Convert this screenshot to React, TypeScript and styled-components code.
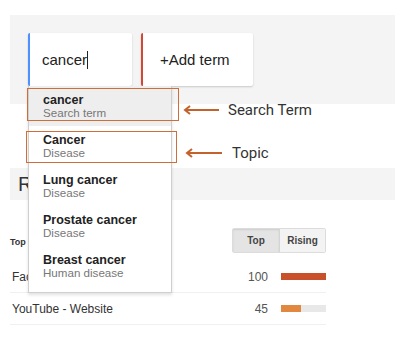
import styled, { createGlobalStyle } from 'styled-components';

const GlobalStyle = createGlobalStyle`
body {
  margin: 0;
  background: #fff;
  font-family: "Liberation Sans", Arial, sans-serif;
  color: #333;
}
`

const Page = styled.div`
position: relative;
width: 385px;
padding: 15px 8px 20px 10px;
`

const TermsPanel = styled.div`
height: 89px;
box-sizing: border-box;
background-color: #f4f4f4;
padding: 18px 0 0 18px;

display: flex;
gap: 9px;
align-items: flex-start;
`

const TermBox = styled.div<{ $accent: string; $width: number; $indent: number }>`
width: ${p => p.$width}px;
height: 53px;
box-sizing: border-box;
background: #fff;
border-left: 2px solid ${p => p.$accent};
border-radius: 2px;
box-shadow: 0 1px 2px rgba(0, 0, 0, 0.18);
padding-left: ${p => p.$indent}px;

display: flex;
align-items: center;
font-size: 15px;
color: #222;
`

const Caret = styled.span`
display: inline-block;
width: 1px;
height: 18px;
background: #222;
`

const SectionHeader = styled.div`
margin-top: 64px;
height: 32px;
background-color: #f4f4f4;
padding-left: 8px;

display: flex;
align-items: center;
font-size: 20px;
color: #333;
`

const Table = styled.div`
width: 316px;
margin-top: 28px;
`

const ToggleRow = styled.div`
height: 25px;
display: flex;
justify-content: space-between;
align-items: center;
margin-bottom: 8px;
`

const SmallLabel = styled.span`
font-size: 9px;
font-weight: bold;
color: #333;
padding-top: 2px;
`

const Toggle = styled.div`
display: flex;
border: 1px solid #dcdcdc;
border-radius: 2px;
overflow: hidden;
height: 25px;
box-sizing: border-box;
`

const ToggleButton = styled.div<{ $active?: boolean }>`
width: ${p => (p.$active ? 46 : 45)}px;
display: flex;
align-items: center;
justify-content: center;
font-size: 10px;
font-weight: bold;
color: #444;
background: ${p => (p.$active ? '#e4e4e4' : '#f3f3f3')};
border-right: ${p => (p.$active ? '1px solid #d4d4d4' : 'none')};
box-shadow: ${p => (p.$active ? 'inset 0 1px 2px rgba(0,0,0,0.1)' : 'none')};
`

const Row = styled.div`
height: 31px;
border-bottom: 1px solid #eef0f5;
display: flex;
align-items: center;
font-size: 12px;
color: #333;
padding-left: 2px;
`

const RowName = styled.span`
flex: 1;
`

const RowValue = styled.span`
width: 40px;
text-align: right;
color: #555;
margin-right: 13px;
`

const Bar = styled.div`
width: 45px;
height: 7px;
background: #e8e8e8;
`

const BarFill = styled.div<{ $color: string }>`
height: 100%;
background: ${p => p.$color};
`

const Dropdown = styled.div`
position: absolute;
left: 28px;
top: 86px;
width: 144px;
box-sizing: border-box;
background: #fff;
border: 1px solid #cfcfcf;
border-top: none;
box-shadow: 0 2px 3px rgba(0, 0, 0, 0.12);
padding-bottom: 6px;
`

const Suggestion = styled.div<{ $selected?: boolean }>`
height: 40px;
box-sizing: border-box;
padding: 8px 0 0 14px;
background: ${p => (p.$selected ? '#eeeeee' : '#fff')};
`

const SuggestionTitle = styled.div`
font-size: 12.5px;
font-weight: bold;
line-height: 13px;
color: #222;
`

const SuggestionType = styled.div`
font-size: 11.6px;
line-height: 12px;
color: #777;
`

const Highlight = styled.div<{ $top: number; $left: number; $width: number; $height: number }>`
position: absolute;
top: ${p => p.$top}px;
left: ${p => p.$left}px;
width: ${p => p.$width}px;
height: ${p => p.$height}px;
box-sizing: border-box;
border: 1.5px solid #cc6f3a;
`

const Callout = styled.div<{ $top: number; $left: number; $gap: number }>`
position: absolute;
top: ${p => p.$top}px;
left: ${p => p.$left}px;
display: flex;
align-items: center;
gap: ${p => p.$gap}px;
font-family: Roboto, "Liberation Sans", sans-serif;
font-size: 15px;
color: #333;
`

function Arrow({ width }: { width: number }): JSX.Element {
  return (
    <svg width={width} height={10} viewBox={`0 0 ${width} 10`}>
      <path d={`M${width} 5 H2`} stroke="#c4622d" strokeWidth="2" fill="none" />
      <path d="M7 1 L2 5 L7 9" stroke="#c4622d" strokeWidth="2" fill="none" strokeLinejoin="miter" />
    </svg>
  );
}

const suggestions = [
  { title: 'cancer', type: 'Search term' },
  { title: 'Cancer', type: 'Disease' },
  { title: 'Lung cancer', type: 'Disease' },
  { title: 'Prostate cancer', type: 'Disease' },
  { title: 'Breast cancer', type: 'Human disease' },
];

const rows = [
  { name: 'Facebook - Social network', value: 100, color: '#c8502a' },
  { name: 'YouTube - Website', value: 45, color: '#e0883f' },
];

function App(): JSX.Element {
  return (
    <Page>
      <GlobalStyle />
      <TermsPanel>
        <TermBox $accent="#4d90fe" $width={104} $indent={12}>cancer<Caret /></TermBox>
        <TermBox $accent="#d14836" $width={112} $indent={17}>+Add term</TermBox>
      </TermsPanel>

      <SectionHeader>Related topics</SectionHeader>

      <Table>
        <ToggleRow>
          <SmallLabel>Top topics</SmallLabel>
          <Toggle>
            <ToggleButton $active>Top</ToggleButton>
            <ToggleButton>Rising</ToggleButton>
          </Toggle>
        </ToggleRow>
        {rows.map(r => (
          <Row key={r.name}>
            <RowName>{r.name}</RowName>
            <RowValue>{r.value}</RowValue>
            <Bar><BarFill $color={r.color} style={{ width: `${r.value}%` }} /></Bar>
          </Row>
        ))}
      </Table>

      <Dropdown>
        {suggestions.map((s, i) => (
          <Suggestion key={s.title} $selected={i === 0}>
            <SuggestionTitle>{s.title}</SuggestionTitle>
            <SuggestionType>{s.type}</SuggestionType>
          </Suggestion>
        ))}
      </Dropdown>

      <Highlight $top={88} $left={27} $width={152} $height={33} />
      <Highlight $top={131} $left={26} $width={151} $height={32} />

      <Callout $top={101} $left={183} $gap={9}>
        <Arrow width={36} />
        <span>Search Term</span>
      </Callout>
      <Callout $top={144} $left={185} $gap={10}>
        <Arrow width={37} />
        <span>Topic</span>
      </Callout>
    </Page>
  );
};

export default App;
